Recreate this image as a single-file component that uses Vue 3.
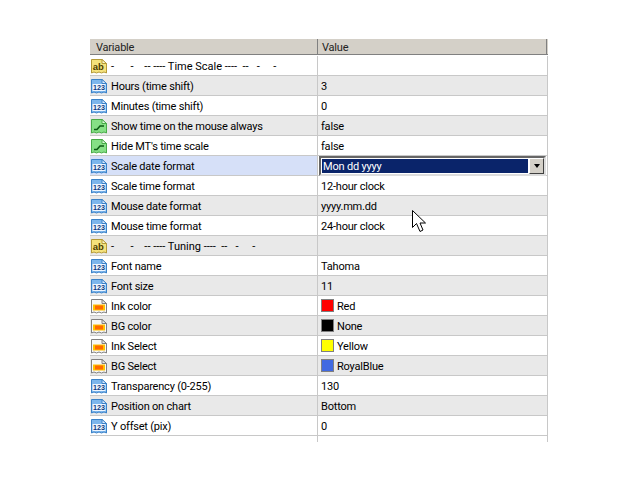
<script setup>
const rows = [
  { icon: 'ab', name: '-      -    -- ---- Time Scale ----  --   -     -', value: '', sep: true },
  { icon: 'num', name: 'Hours (time shift)', value: '3' },
  { icon: 'num', name: 'Minutes (time shift)', value: '0' },
  { icon: 'bool', name: 'Show time on the mouse always', value: 'false' },
  { icon: 'bool', name: "Hide MT's time scale", value: 'false' },
  { icon: 'num', name: 'Scale date format', value: 'Mon dd yyyy', selected: true },
  { icon: 'num', name: 'Scale time format', value: '12-hour clock' },
  { icon: 'num', name: 'Mouse date format', value: 'yyyy.mm.dd' },
  { icon: 'num', name: 'Mouse time format', value: '24-hour clock' },
  { icon: 'ab', name: '-      -    -- ---- Tuning ----  --   -     -', value: '', sep: true },
  { icon: 'num', name: 'Font name', value: 'Tahoma' },
  { icon: 'num', name: 'Font size', value: '11' },
  { icon: 'color', name: 'Ink color', value: 'Red', swatch: '#ff0000' },
  { icon: 'color', name: 'BG color', value: 'None', swatch: '#000000' },
  { icon: 'color', name: 'Ink Select', value: 'Yellow', swatch: '#ffff00' },
  { icon: 'color', name: 'BG Select', value: 'RoyalBlue', swatch: '#4169e1' },
  { icon: 'num', name: 'Transparency (0-255)', value: '130' },
  { icon: 'num', name: 'Position on chart', value: 'Bottom' },
  { icon: 'num', name: 'Y offset (pix)', value: '0' },
]
const palette = {
  ab: { fill: '#f5e27c', stroke: '#b49a38', fold: '#fff8c8' },
  num: { fill: '#7db6ec', stroke: '#3b82c8', fold: '#dcecff' },
  bool: { fill: '#86e086', stroke: '#48aa48', fold: '#dcfadc' },
  color: { fill: '#f8f8f8', stroke: '#808080', fold: '#e8e8e8' },
}
</script>

<template>
  <div class="page">
    <div class="grid">
      <div class="head">
        <div class="hcell hname">Variable</div>
        <div class="hcell hvalue">Value</div>
      </div>
      <div v-for="(r, i) in rows" :key="i" class="row" :class="{ alt: i % 2 === 1 && !r.selected }">
        <div class="name" :class="{ chosen: r.selected }">
          <svg class="icon" width="16" height="16" viewBox="0 0 16 16">
            <path
              d="M0.5 1.5H11L15.5 5.5V15L13 14L10.5 15L8 14L5.5 15L3 14L0.5 15Z"
              :fill="palette[r.icon].fill"
              :stroke="palette[r.icon].stroke"
            />
            <path d="M11 1.5V5.5H15.5Z" :fill="palette[r.icon].fold" :stroke="palette[r.icon].stroke" />
            <template v-if="r.icon === 'ab'">
              <text x="1.8" y="12" class="glyph ab">ab</text>
            </template>
            <template v-else-if="r.icon === 'num'">
              <rect x="1.5" y="6" width="13" height="7" fill="#eef6ff" />
              <text x="2" y="12" textLength="12" lengthAdjust="spacingAndGlyphs" class="glyph num">123</text>
            </template>
            <template v-else-if="r.icon === 'bool'">
              <path d="M3 11.5H6L9 8H13" fill="none" stroke="#0c5c14" stroke-width="1.5" />
            </template>
            <template v-else>
              <rect x="2" y="6.5" width="12" height="6" fill="#ffc000" />
              <rect x="4" y="7.5" width="8" height="4" fill="#ff6a00" />
            </template>
          </svg>
          <span class="label" :class="{ sep: r.sep }">{{ r.name }}</span>
        </div>
        <div class="value">
          <div v-if="r.selected" class="editor">
            <div class="edit-text">{{ r.value }}</div>
            <div class="drop"><span class="arrow"></span></div>
          </div>
          <template v-else>
            <span v-if="r.swatch" class="swatch" :style="{ background: r.swatch }"></span>
            <span class="vtext">{{ r.value }}</span>
          </template>
        </div>
      </div>
      <div class="tail"><div class="tail-left"></div><div class="tail-right"></div></div>
    </div>
    <svg class="cursor" width="15" height="23" viewBox="0 0 15 23">
      <path d="M0.5 0.5V17.5L4.5 13.5L8 21.5L11 20L8 13H13.5Z" fill="#fff" stroke="#000" />
    </svg>
  </div>
</template>

<style scoped>
.page {
  position: relative;
  width: 640px;
  height: 480px;
  background: #fff;
  padding: 39px 0 0 90px;
  box-sizing: border-box;
  font-family: Roboto, "Liberation Sans", Arial, sans-serif;
  font-size: 11px;
  letter-spacing: -0.2px;
  color: #000;
  overflow: hidden;
}
.grid { width: 458px; }
.head { display: flex; height: 16px; margin-bottom: 1px; background: #d4d0c8; box-sizing: border-box; border-bottom: 1px solid #808080; }
.hcell { box-sizing: border-box; line-height: 17px; border-right: 1px solid #808080; color: #222; }
.hname { width: 228px; padding-left: 6px; }
.hvalue { width: 229px; padding-left: 4px; }
.row { display: flex; height: 20px; box-sizing: border-box; }
.row.alt { background: #e9e9e9; }
.name {
  width: 228px;
  box-sizing: border-box;
  display: flex;
  align-items: center;
  border-bottom: 1px solid #c8c8c8;
  border-right: 1px solid #c8c8c8;
  padding-left: 1px;
  gap: 4px;
}
.name.chosen { background: #d6e0f8; }
.icon { flex: none; display: block; }
.label { white-space: pre; padding-top: 2px; }
.label.sep { letter-spacing: 0; }
.vtext { padding-top: 2px; }
.glyph { font-family: "Liberation Sans", sans-serif; font-weight: 700; letter-spacing: 0; }
.glyph.ab { font-size: 9.5px; fill: #4a3c00; }
.glyph.num { font-size: 7px; fill: #0c3a80; }
.value {
  width: 230px;
  box-sizing: border-box;
  display: flex;
  align-items: center;
  gap: 3px;
  padding-left: 3px;
  border-bottom: 1px solid #c8c8c8;
  border-right: 1px solid #c8c8c8;
  position: relative;
}
.swatch { width: 11px; height: 11px; border: 1px solid #808080; flex: none; }
.editor {
  position: absolute;
  left: 1px;
  top: 0;
  width: 227px;
  height: 20px;
  box-sizing: border-box;
  border: 2px solid;
  border-color: #666 #ddd #ddd #666;
  background: #fff;
  display: flex;
}
.edit-text { flex: 1; margin: 1px; background: #0a246a; color: #fff; padding-left: 1px; line-height: 15px; }
.drop {
  width: 15px;
  background: #d4d0c8;
  border: 1px solid;
  border-color: #fff #404040 #404040 #fff;
  box-sizing: border-box;
  display: flex;
  align-items: center;
  justify-content: center;
}
.arrow { width: 0; height: 0; border: 3.5px solid transparent; border-top: 4px solid #000; border-bottom: 0; }
.tail { display: flex; height: 6px; }
.tail-left { width: 228px; border-right: 1px solid #c8c8c8; box-sizing: border-box; }
.tail-right { width: 230px; border-right: 1px solid #c8c8c8; box-sizing: border-box; }
.cursor { position: absolute; left: 412px; top: 210px; }
</style>
